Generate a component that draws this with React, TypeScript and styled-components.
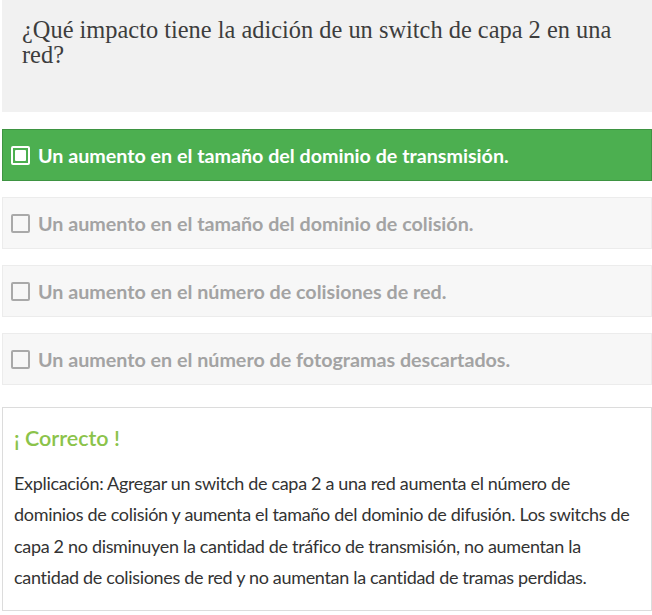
import React from "react";
import styled, { createGlobalStyle } from "styled-components";

const Global = createGlobalStyle`
  html, body { margin: 0; padding: 0; background: #fff; }
  body { font-family: Lato, "Open Sans", sans-serif; }
`;

const Page = styled.div`
  width: 652px;
  padding: 0 0 0 2px;
  box-sizing: border-box;
  display: flex;
  flex-direction: column;
`;

const QuestionBox = styled.div`
  background: #f1f1f1;
  height: 112px;
  box-sizing: border-box;
  padding: 17px 16px 0 20px;
`;

const QuestionText = styled.h2`
  margin: 0;
  font-family: "Liberation Serif", "DejaVu Serif", serif;
  font-weight: 400;
  font-size: 24.4px;
  line-height: 25px;
  color: #3d3d3d;
`;

const Options = styled.div`
  display: flex;
  flex-direction: column;
  gap: 16px;
  margin-top: 17px;
`;

const Option = styled.div<{ $selected?: boolean }>`
  height: 52px;
  box-sizing: border-box;
  display: flex;
  align-items: center;
  gap: 8px;
  padding: 0 8px;
  border: 1px solid ${(p) => (p.$selected ? "#3e9442" : "#ececec")};
  background: ${(p) => (p.$selected ? "#4caf50" : "#f7f7f7")};
  color: ${(p) => (p.$selected ? "#ffffff" : "#a3a3a3")};
  font-weight: 700;
  font-size: 19.7px;
`;

const Box = styled.span<{ $selected?: boolean }>`
  width: 19px;
  height: 19px;
  box-sizing: border-box;
  border-radius: 2px;
  border: 2px solid ${(p) => (p.$selected ? "#ffffff" : "#a9a9a9")};
  display: flex;
  align-items: center;
  justify-content: center;
  flex: none;
  &::after {
    content: "";
    display: ${(p) => (p.$selected ? "block" : "none")};
    width: 11px;
    height: 11px;
    border-radius: 1px;
    background: #ffffff;
  }
`;

const Explanation = styled.div`
  margin-top: 22px;
  border: 1px solid #dcdcdc;
  padding: 17px 15px 16px 11px;
  height: 204px;
  box-sizing: border-box;
`;

const Correct = styled.div`
  color: #8bc34a;
  font-size: 21.5px;
  font-weight: 600;
  line-height: 26px;
  margin-bottom: 17px;
`;

const ExplText = styled.p`
  margin: 0;
  color: #333;
  font-size: 18px;
  letter-spacing: -0.32px;
  line-height: 31.3px;
`;

const options = [
  "Un aumento en el tamaño del dominio de transmisión.",
  "Un aumento en el tamaño del dominio de colisión.",
  "Un aumento en el número de colisiones de red.",
  "Un aumento en el número de fotogramas descartados.",
];

export default function App() {
  return (
    <>
      <Global />
      <Page>
        <QuestionBox>
          <QuestionText>
            ¿Qué impacto tiene la adición de un switch de capa 2 en una red?
          </QuestionText>
        </QuestionBox>
        <Options>
          {options.map((o, i) => (
            <Option key={i} $selected={i === 0}>
              <Box $selected={i === 0} />
              <span>{o}</span>
            </Option>
          ))}
        </Options>
        <Explanation>
          <Correct>¡ Correcto !</Correct>
          <ExplText>
            Explicación: Agregar un switch de capa 2 a una red aumenta el número de
            dominios de colisión y aumenta el tamaño del dominio de difusión. Los
            switchs de capa 2 no disminuyen la cantidad de tráfico de transmisión, no
            aumentan la cantidad de colisiones de red y no aumentan la cantidad de
            tramas perdidas.
          </ExplText>
        </Explanation>
      </Page>
    </>
  );
}
